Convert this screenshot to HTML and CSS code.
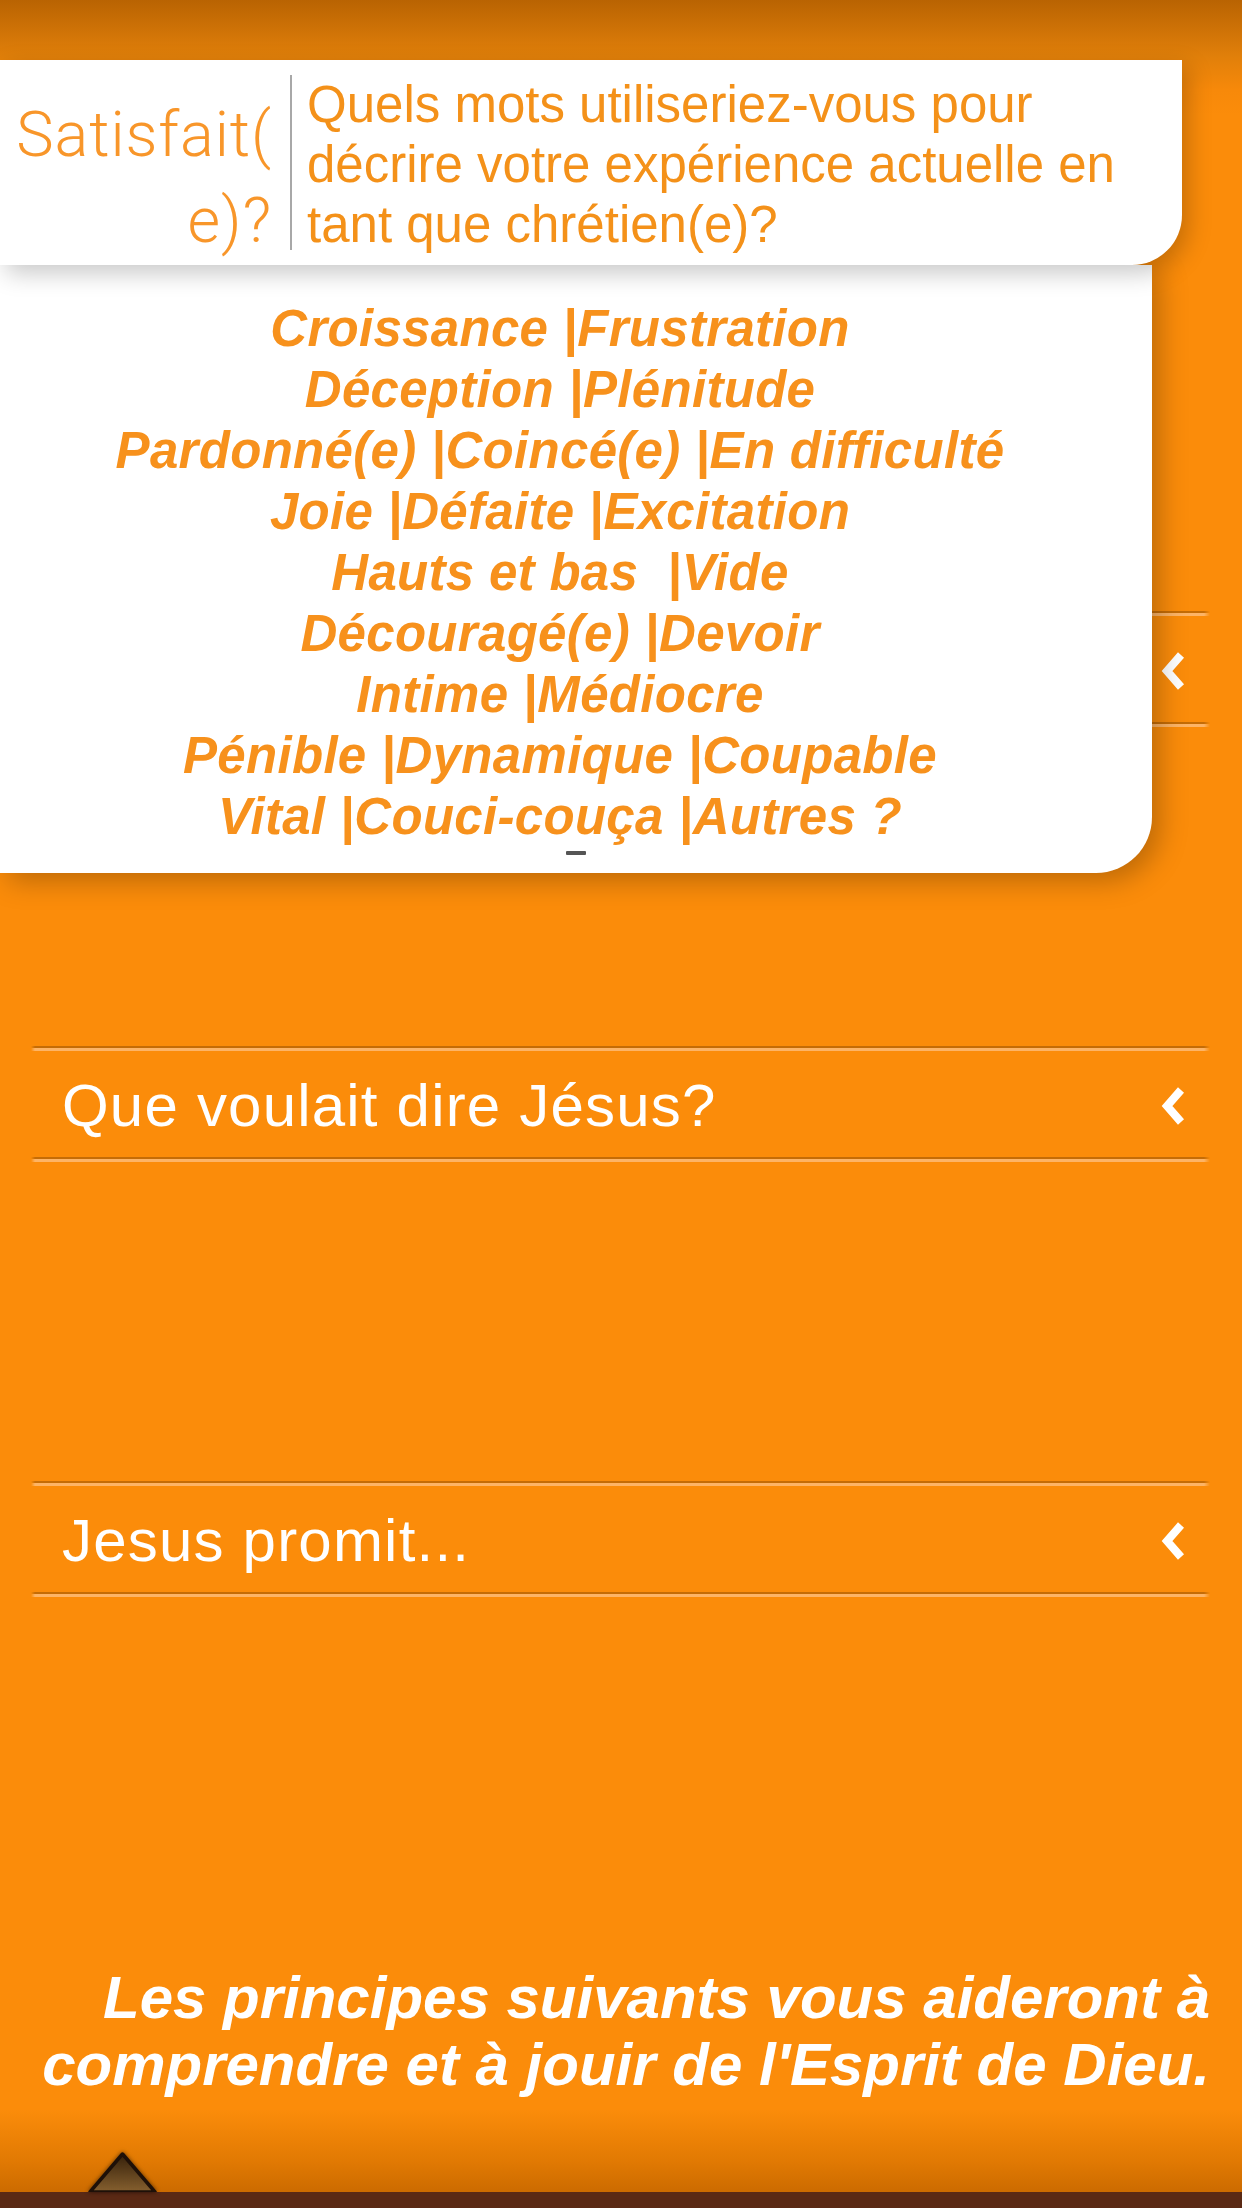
FILE: index.html
```html
<!DOCTYPE html>
<html lang="fr">
<head>
<meta charset="utf-8">
<title>Satisfait(e)?</title>
<link rel="stylesheet" href="styles.css">
</head>
<body>
<div class="page">
  <div class="popup">
    <div class="qcard">
      <div class="label">Satisfait(<br>e)?</div>
      <div class="divider"></div>
      <div class="question">Quels mots utiliseriez-vous pour<br>décrire votre expérience actuelle en<br>tant que chrétien(e)?</div>
    </div>
    <div class="wcard">
      <div class="words">
        <div>Croissance |Frustration</div>
        <div>Déception |Plénitude</div>
        <div>Pardonné(e) |Coincé(e) |En difficulté</div>
        <div>Joie |Défaite |Excitation</div>
        <div>Hauts et bas &nbsp;|Vide</div>
        <div>Découragé(e) |Devoir</div>
        <div>Intime |Médiocre</div>
        <div>Pénible |Dynamique |Coupable</div>
        <div>Vital |Couci-couça |Autres ?</div>
      </div>
      <div class="dash"></div>
    </div>
  </div>

  <div class="content">
    <div class="accordion">
      <div class="row">
        <div class="sep"></div>
        <div class="row-body">
          <span class="row-label"></span>
          <svg class="chev" viewBox="0 0 28 44" width="28" height="44"><polyline points="21,6 7,22 21,38" /></svg>
        </div>
        <div class="sep"></div>
      </div>
      <div class="row">
        <div class="sep"></div>
        <div class="row-body">
          <span class="row-label">Que voulait dire Jésus?</span>
          <svg class="chev" viewBox="0 0 28 44" width="28" height="44"><polyline points="21,6 7,22 21,38" /></svg>
        </div>
        <div class="sep"></div>
      </div>
      <div class="row">
        <div class="sep"></div>
        <div class="row-body">
          <span class="row-label">Jesus promit...</span>
          <svg class="chev" viewBox="0 0 28 44" width="28" height="44"><polyline points="21,6 7,22 21,38" /></svg>
        </div>
        <div class="sep"></div>
      </div>
    </div>
    <p class="intro">Les principes suivants vous aideront à<br>comprendre et à jouir de l'Esprit de Dieu.</p>
  </div>

  <div class="footer">
    <svg class="tri" viewBox="0 0 71 41" width="71" height="41">
      <defs>
        <linearGradient id="triFill" x1="0" y1="0" x2="0" y2="1">
          <stop offset="0" stop-color="#35200a"/>
          <stop offset="1" stop-color="#86602f"/>
        </linearGradient>
      </defs>
      <polygon points="35.5,3 68,41 3,41" fill="url(#triFill)" stroke="#1e1008" stroke-width="3.5" stroke-linejoin="round"/>
    </svg>
    <div class="bar"></div>
  </div>
</div>
</body>
</html>
```

FILE: styles.css
```css
html, body {
  margin: 0;
  padding: 0;
}

body {
  width: 1242px;
  min-height: 2208px;
  overflow: hidden;
  font-family: "Liberation Sans", Arial, Helvetica, sans-serif;
  background: linear-gradient(180deg,
    #b96302 0px,
    #e07f0a 55px,
    #f7890a 90px,
    #fb8c0a 115px,
    #fb8c0a 2110px,
    #e27a03 2160px,
    #cc6b00 2192px);
}

.page {
  position: relative;
  min-height: 2208px;
  display: flex;
  flex-direction: column;
}

/* Overlay popup */
.popup {
  position: absolute;
  top: 60px;
  left: 0;
  width: 1182px;
  z-index: 5;
  display: flex;
  flex-direction: column;
}

.qcard {
  position: relative;
  z-index: 2;
  width: 1182px;
  height: 205px;
  background: #fff;
  border-radius: 0 0 50px 0;
  box-shadow: 6px 8px 24px rgba(0, 0, 0, 0.22);
  display: flex;
  align-items: flex-start;
}

.label {
  flex: none;
  width: 272px;
  margin-top: 32px;
  text-align: right;
  font-family: "Roboto", "Liberation Sans", sans-serif;
  font-weight: 300;
  font-size: 63px;
  line-height: 86px;
  letter-spacing: 0.9px;
  color: #f8962a;
}

.divider {
  flex: none;
  width: 2px;
  height: 175px;
  margin: 15px 0 0 18px;
  background: #a8a8a8;
}

.question {
  margin: 15px 0 0 15px;
  font-size: 51px;
  line-height: 60px;
  color: #f49119;
}

.wcard {
  position: relative;
  z-index: 1;
  width: 1152px;
  height: 608px;
  box-sizing: border-box;
  padding-top: 33px;
  background: #fff;
  border-radius: 0 0 56px 0;
  box-shadow: 8px 8px 28px rgba(0, 0, 0, 0.25);
}

.words {
  padding-right: 32px;
  text-align: center;
  font-style: italic;
  font-weight: 700;
  font-size: 51px;
  line-height: 61px;
  letter-spacing: 0.3px;
  color: #f7911c;
  white-space: nowrap;
}

.dash {
  width: 20px;
  height: 4px;
  margin: 4px auto 0;
  border-radius: 1px;
  background: #555;
}

/* Main flow */
.content {
  padding: 611px 32px 0 31px;
  display: flex;
  flex-direction: column;
}

.accordion {
  display: flex;
  flex-direction: column;
  gap: 319px;
}

.row {
  height: 116px;
  display: flex;
  flex-direction: column;
}

.sep {
  flex: none;
  height: 5px;
  background: linear-gradient(180deg, #c56c06 0, #c56c06 2px, #fdb466 2px, #fdb466 5px);
  -webkit-mask-image: linear-gradient(90deg, transparent 0, #000 4px, #000 calc(100% - 6px), transparent 100%);
  mask-image: linear-gradient(90deg, transparent 0, #000 4px, #000 calc(100% - 6px), transparent 100%);
}

.row-body {
  flex: 1;
  display: flex;
  align-items: center;
  justify-content: space-between;
  padding: 3px 22px 0 31px;
}

.row-label {
  font-size: 60px;
  line-height: 1;
  letter-spacing: 1.2px;
  color: #fff;
}

.chev {
  flex: none;
  display: block;
}

.chev polyline {
  fill: none;
  stroke: #fff;
  stroke-width: 8;
  stroke-linejoin: miter;
  stroke-linecap: butt;
}

.intro {
  margin: 367px 0 0;
  text-align: right;
  color: #fff;
  font-style: italic;
  font-weight: 700;
  font-size: 60px;
  line-height: 67px;
  white-space: nowrap;
}

/* Footer */
.footer {
  margin-top: auto;
}

.tri {
  display: block;
  margin-left: 87px;
  filter: drop-shadow(0 0 2px rgba(0, 0, 0, 0.6));
}

.bar {
  height: 16px;
  background: #5a2914;
}
```
